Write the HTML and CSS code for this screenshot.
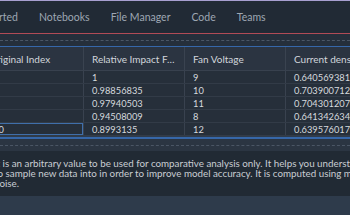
FILE: index.html
```html
<!DOCTYPE html>
<html>
<head>
<meta charset="utf-8">
<link rel="stylesheet" href="styles.css">
</head>
<body>
<div class="app">
  <nav class="topnav">
    <a class="nav-item nav-first">Get Started</a>
    <a class="nav-item">Notebooks</a>
    <a class="nav-item">File Manager</a>
    <a class="nav-item">Code</a>
    <a class="nav-item">Teams</a>
  </nav>
  <div class="toolbar"><div class="dots"></div></div>
  <div class="grid-wrap">
    <table class="grid">
      <colgroup>
        <col class="c1"><col class="c2"><col class="c3"><col class="c4">
      </colgroup>
      <thead>
        <tr><th>Original Index</th><th>Relative Impact Factor</th><th>Fan Voltage</th><th>Current density</th></tr>
      </thead>
      <tbody>
        <tr><td>4</td><td>1</td><td>9</td><td>0.640569381</td></tr>
        <tr><td>5</td><td>0.98856835</td><td>10</td><td>0.703900712</td></tr>
        <tr><td>6</td><td>0.97940503</td><td>11</td><td>0.704301207</td></tr>
        <tr><td>3</td><td>0.94508009</td><td>8</td><td>0.641342634</td></tr>
        <tr><td class="selected">10</td><td>0.8993135</td><td>12</td><td>0.639576017</td></tr>
      </tbody>
    </table>
  </div>
  <div class="divider"><div class="dots"></div></div>
  <section class="info">
    <p class="info-line">It is an arbitrary value to be used for comparative analysis only. It helps you understand</p>
    <p class="info-line">to sample new data into in order to improve model accuracy. It is computed using model</p>
    <p class="info-line">noise.</p>
  </section>
  <div class="footer"></div>
</div>
</body>
</html>
```

FILE: styles.css
```css
html, body {
  margin: 0;
  padding: 0;
  background: #2e3b4b;
  overflow: hidden;
}
.app {
  width: 350px;
  height: 215px;
  overflow: hidden;
  font-family: Lato, "Open Sans", sans-serif;
  display: flex;
  flex-direction: column;
}
.topnav {
  flex: none;
  height: 32px;
  border-top: 1px solid #a79fd0;
  border-bottom: 1px solid #b14b56;
  background: #212a35;
  display: flex;
  align-items: center;
  gap: 21px;
  margin-left: -35px;
  white-space: nowrap;
}
.nav-item {
  color: #9ea7b3;
  font-size: 10.5px;
}
.toolbar {
  flex: none;
  height: 12px;
  background: #252f3b;
  border-bottom: 1px solid #3667a9;
  display: flex;
  flex-direction: column;
  justify-content: center;
}
.dots {
  border-top: 1px dashed #4b5665;
}
.grid-wrap {
  flex: none;
  margin-left: -20px;
  width: 420px;
}
.grid {
  table-layout: fixed;
  border-collapse: collapse;
  width: 406px;
  font-size: 9.3px;
}
.c1 { width: 103px; }
.c2 { width: 101px; }
.c3 { width: 101px; }
.c4 { width: 101px; }
.grid th {
  height: 23px;
  padding: 0 8px;
  background: #2b3441;
  color: #d2d6dc;
  font-weight: normal;
  font-size: 10px;
  text-align: left;
  white-space: nowrap;
  overflow: hidden;
  text-overflow: ellipsis;
  border-left: 1px solid #3a4350;
  border-bottom: 1px solid #38414e;
}
.grid td {
  height: 12px;
  padding: 0 8px;
  background: #262f3a;
  color: #d6dade;
  white-space: nowrap;
  overflow: hidden;
  border-left: 1px solid #39424f;
  border-bottom: 1px solid #323b47;
}
.grid td.selected {
  box-shadow: inset 0 0 0 1px #3f6fab;
  text-align: right;
  padding-right: 79px;
}
.divider {
  flex: none;
  margin-top: 1px;
  height: 12px;
  border-top: 2px solid #3667a9;
  background: #2b3542;
  display: flex;
  flex-direction: column;
  justify-content: center;
}
.info {
  flex: none;
  height: 45px;
  background: #212a34;
  padding-top: 7px;
  box-sizing: border-box;
  margin-left: -6px;
  width: 440px;
}
.info-line {
  margin: 0;
  color: #c9cdd3;
  font-size: 9.8px;
  line-height: 10px;
  white-space: nowrap;
}
.footer {
  flex: 1;
  background: #2e3b4b;
}
```
